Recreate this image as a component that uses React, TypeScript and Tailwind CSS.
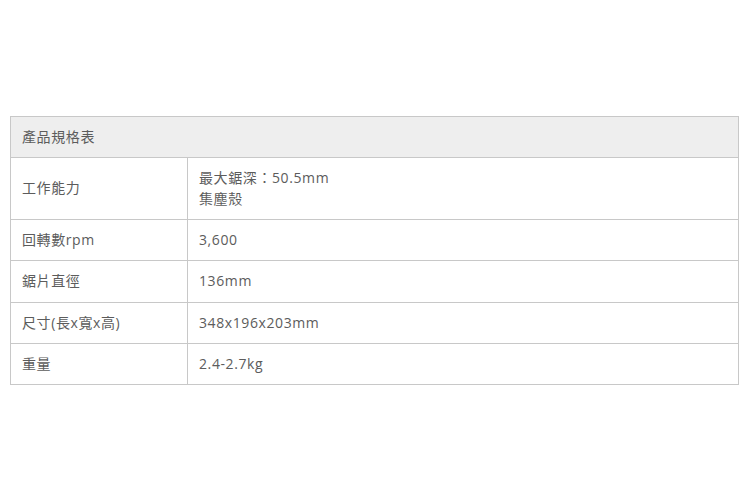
import React from "react";

const rows: [string, string[]][] = [
  ["工作能力", ["最大鋸深：50.5mm", "集塵殼"]],
  ["回轉數rpm", ["3,600"]],
  ["鋸片直徑", ["136mm"]],
  ["尺寸(長x寬x高)", ["348x196x203mm"]],
  ["重量", ["2.4-2.7kg"]],
];

export default function App() {
  return (
    <div
      className="w-[750px] h-[500px] bg-white pt-[116px] pl-[10px]"
      style={{ fontFamily: '"Open Sans", "Noto Sans CJK TC", sans-serif' }}
    >
      <table className="w-[729px] border-collapse text-[14px] leading-[20.33px] tracking-[0.6px] text-[#5c5c5c]">
        <thead>
          <tr>
            <th
              colSpan={2}
              className="bg-[#eeeeee] border border-[#c8c8c8] px-[11px] py-[10px] text-left font-normal"
            >
              產品規格表
            </th>
          </tr>
        </thead>
        <tbody>
          {rows.map(([k, v]) => (
            <tr key={k}>
              <td className="w-[177px] border border-[#c8c8c8] px-[11px] py-[10px] align-middle">
                {k}
              </td>
              <td className="border border-[#c8c8c8] px-[11px] py-[10px] align-middle">
                {v.map((line) => (
                  <div key={line}>{line}</div>
                ))}
              </td>
            </tr>
          ))}
        </tbody>
      </table>
    </div>
  );
}
